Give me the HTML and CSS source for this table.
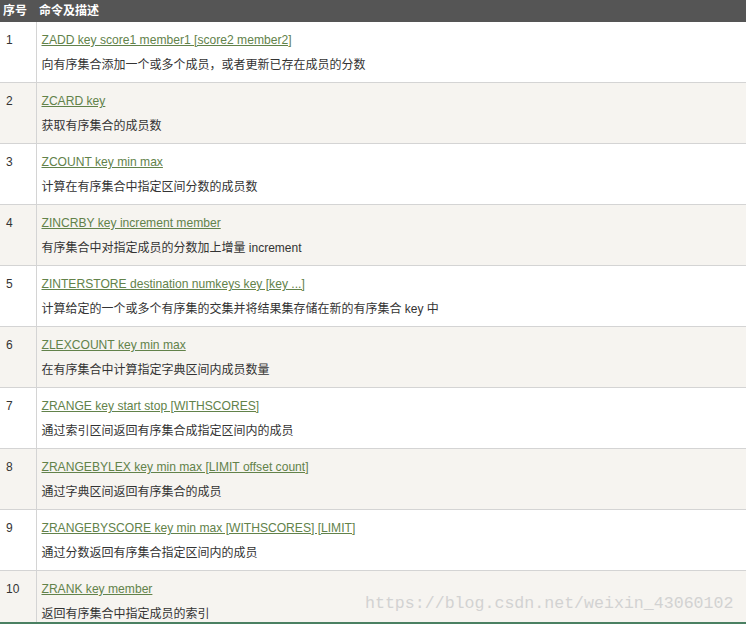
FILE: index.html
```html
<!DOCTYPE html>
<html>
<head>
<meta charset="utf-8">
<link rel="stylesheet" href="styles.css">
</head>
<body>
<div class="frame">
<table class="cmd">
<thead>
<tr><th class="num">序号</th><th>命令及描述</th></tr>
</thead>
<tbody>
<tr><td class="num">1</td><td><div class="line"><a href="#">ZADD key score1 member1 [score2 member2]</a></div><div class="line desc">向有序集合添加一个或多个成员，或者更新已存在成员的分数</div></td></tr>
<tr class="alt"><td class="num">2</td><td><div class="line"><a href="#">ZCARD key</a></div><div class="line desc">获取有序集合的成员数</div></td></tr>
<tr><td class="num">3</td><td><div class="line"><a href="#">ZCOUNT key min max</a></div><div class="line desc">计算在有序集合中指定区间分数的成员数</div></td></tr>
<tr class="alt"><td class="num">4</td><td><div class="line"><a href="#">ZINCRBY key increment member</a></div><div class="line desc">有序集合中对指定成员的分数加上增量 increment</div></td></tr>
<tr><td class="num">5</td><td><div class="line"><a href="#">ZINTERSTORE destination numkeys key [key ...]</a></div><div class="line desc">计算给定的一个或多个有序集的交集并将结果集存储在新的有序集合 key 中</div></td></tr>
<tr class="alt"><td class="num">6</td><td><div class="line"><a href="#">ZLEXCOUNT key min max</a></div><div class="line desc">在有序集合中计算指定字典区间内成员数量</div></td></tr>
<tr><td class="num">7</td><td><div class="line"><a href="#">ZRANGE key start stop [WITHSCORES]</a></div><div class="line desc">通过索引区间返回有序集合成指定区间内的成员</div></td></tr>
<tr class="alt"><td class="num">8</td><td><div class="line"><a href="#">ZRANGEBYLEX key min max [LIMIT offset count]</a></div><div class="line desc">通过字典区间返回有序集合的成员</div></td></tr>
<tr><td class="num">9</td><td><div class="line"><a href="#">ZRANGEBYSCORE key min max [WITHSCORES] [LIMIT]</a></div><div class="line desc">通过分数返回有序集合指定区间内的成员</div></td></tr>
<tr class="alt"><td class="num">10</td><td><div class="line"><a href="#">ZRANK key member</a></div><div class="line desc">返回有序集合中指定成员的索引</div></td></tr>
</tbody>
</table>
<div class="watermark">https://blog.csdn.net/weixin_43060102</div>
</div>
</body>
</html>
```

FILE: styles.css
```css
html, body {
  margin: 0;
  padding: 0;
  background: #fff;
}
body {
  font-family: "Liberation Sans", "Noto Sans CJK SC", sans-serif;
  font-size: 12px;
  color: #333;
}
.frame {
  position: relative;
  width: 746px;
  height: 622px;
  overflow: hidden;
  border-bottom: 2px solid #4a8062;
}
.cmd {
  width: 746px;
  border-collapse: collapse;
  table-layout: fixed;
}
.cmd th {
  background: #555;
  color: #fff;
  font-weight: bold;
  text-align: left;
  height: 22px;
  padding: 0 3px;
  line-height: 22px;
  box-sizing: border-box;
}
.cmd th.num {
  width: 36px;
  padding-left: 3px;
}
.cmd td {
  padding: 7px 5px 5px;
  vertical-align: top;
  border-top: 1px solid #d4d4d4;
  border-left: 1px solid #d4d4d4;
}
.cmd tbody tr:first-child td {
  border-top: none;
}
.cmd td.num {
  border-left: none;
  padding-left: 6px;
  line-height: 23px;
}
.cmd tr.alt td {
  background: #f6f4f0;
}
.line {
  line-height: 23px;
  height: 23px;
  white-space: nowrap;
}
.line.desc {
  margin-top: 2px;
}
.line a {
  color: #62824a;
  font-size: 12.1px;
  text-decoration: underline;
}
.watermark {
  position: absolute;
  left: 365px;
  top: 594px;
  font-family: "Liberation Mono", "DejaVu Sans Mono", monospace;
  font-size: 16.6px;
  color: #d2d2d2;
  white-space: nowrap;
}
```
